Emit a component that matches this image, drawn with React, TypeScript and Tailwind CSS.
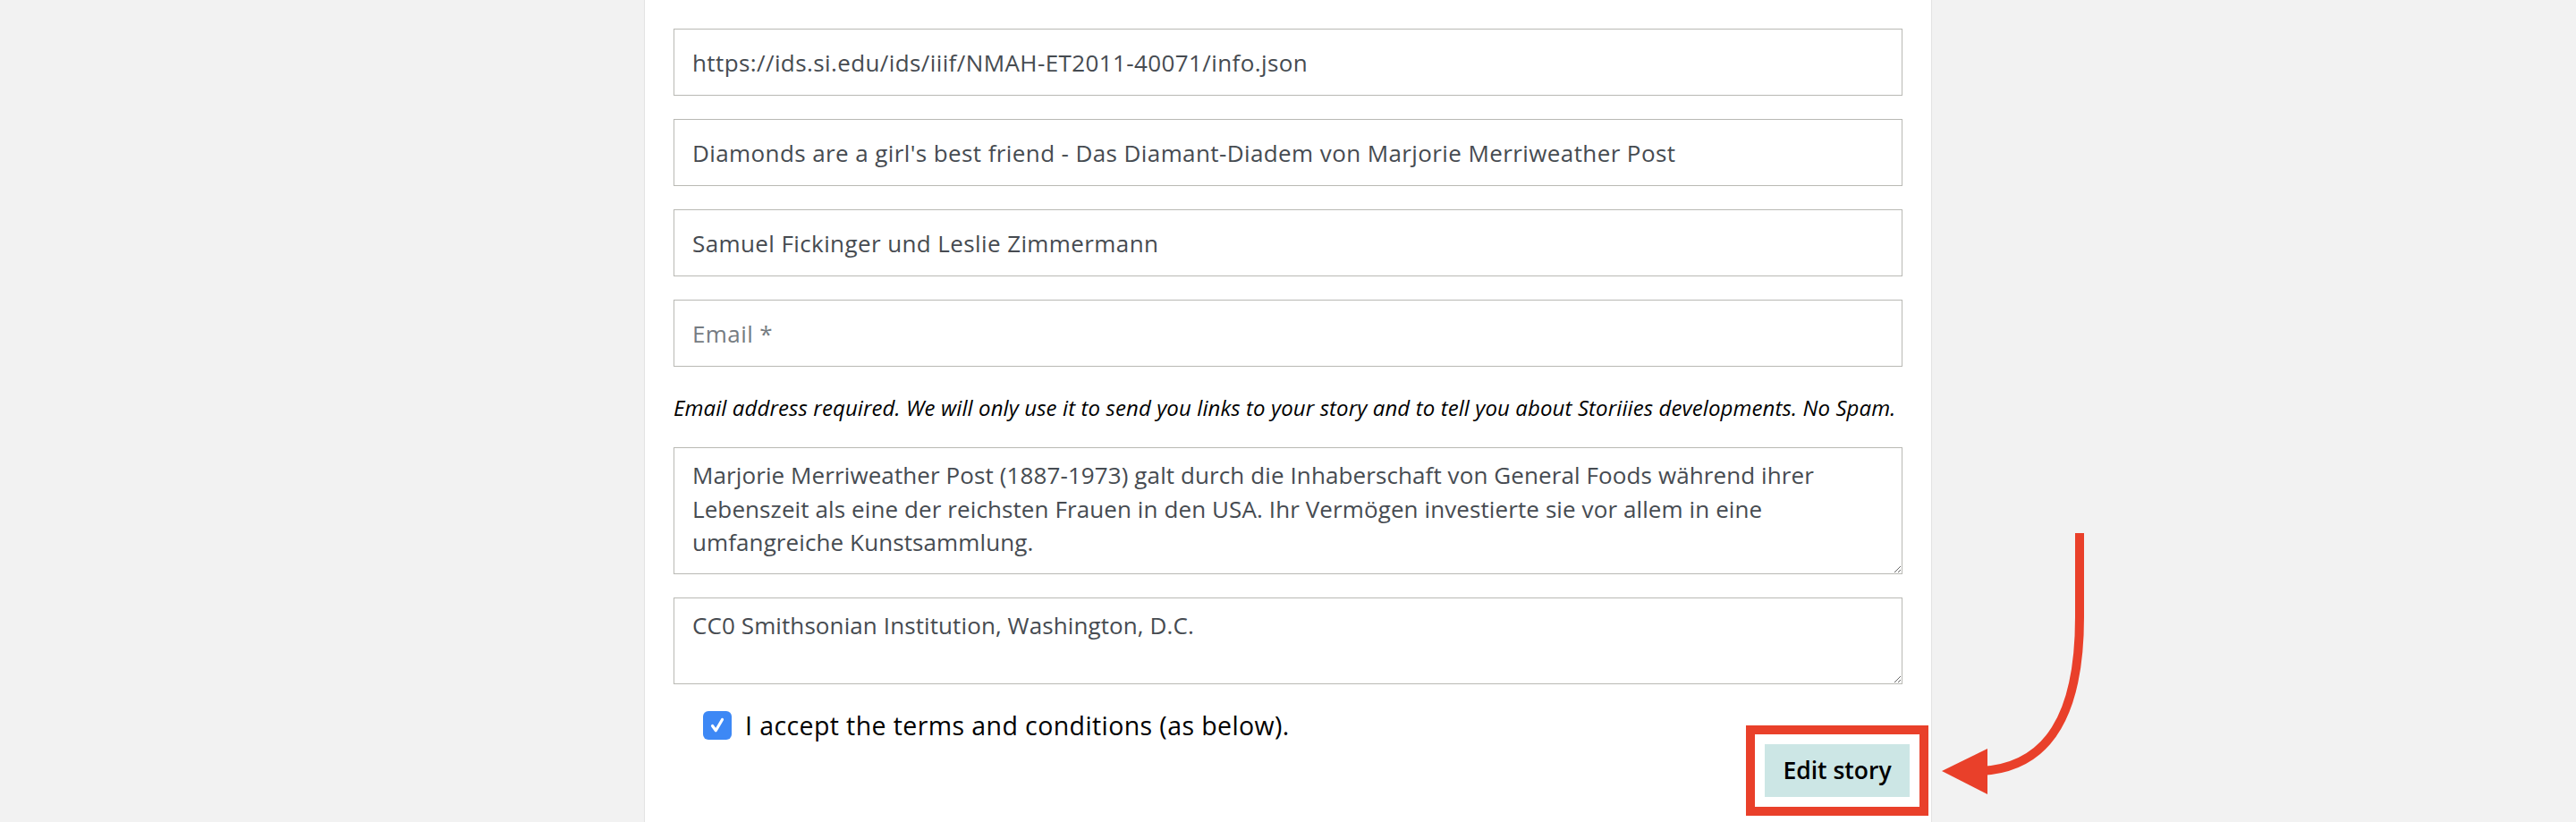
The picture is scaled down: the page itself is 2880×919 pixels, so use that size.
import React from "react";

const fieldCls =
  "block w-full h-[75px] border border-[#b9b9b4] bg-white px-[20px] text-[26px] tracking-[0.4px] text-[#464b51] placeholder:text-[#767c82] outline-none";
const areaCls =
  "block w-full border border-[#b9b9b4] bg-white px-[20px] pt-[12px] text-[26px] leading-[37.5px] tracking-[0.1px] text-[#464b51] outline-none";

const App: React.FC = () => {
  return (
    <div className="relative min-h-[919px] overflow-hidden bg-[#f2f2f2] font-['Open_Sans',sans-serif]">
      <div className="mx-auto min-h-[919px] w-[1440px] border-x border-[#e3e3e3] bg-white px-8 pt-8">
        <div className="flex flex-col gap-[26px]">
          <input className={fieldCls} defaultValue="https://ids.si.edu/ids/iiif/NMAH-ET2011-40071/info.json" />
          <input
            className={fieldCls}
            defaultValue="Diamonds are a girl's best friend - Das Diamant-Diadem von Marjorie Merriweather Post"
          />
          <input className={fieldCls} defaultValue="Samuel Fickinger und Leslie Zimmermann" />
          <input className={fieldCls} placeholder="Email *" />
        </div>
        <p className="mt-[29px] text-[24px] leading-[34px] italic tracking-[0.1px] text-black">
          Email address required. We will only use it to send you links to your story and to tell you about Storiiies
          developments. No Spam.
        </p>
        <textarea
          className={`${areaCls} mt-[27px] h-[142px]`}
          defaultValue="Marjorie Merriweather Post (1887-1973) galt durch die Inhaberschaft von General Foods während ihrer Lebenszeit als eine der reichsten Frauen in den USA. Ihr Vermögen investierte sie vor allem in eine umfangreiche Kunstsammlung."
        />
        <textarea
          className={`${areaCls} mt-[26px] h-[97px]`}
          defaultValue="CC0 Smithsonian Institution, Washington, D.C."
        />
        <label className="mt-[29px] flex items-center gap-[15px] pl-[33px] text-[28.5px] leading-[34px] tracking-[0.4px] text-black">
          <span className="flex h-[32px] w-[32px] items-center justify-center rounded-[6px] bg-[#3d88f5]">
            <svg viewBox="0 0 24 24" className="h-[24px] w-[24px]" fill="none" stroke="white" strokeWidth="3.2" strokeLinecap="round" strokeLinejoin="round">
              <path d="M6.5 12.5l3.8 5.2L17.5 5.5" />
            </svg>
          </span>
          I accept the terms and conditions (as below).
        </label>
        <div className="flex justify-end">
          <div className="relative mr-[-8px] mt-[4px]">
            <button className="h-[59px] w-[162px] bg-[#cce6e5] text-[26.5px] font-semibold text-black">Edit story</button>
            <div className="pointer-events-none absolute -inset-[21px] border-[10px] border-[#e9402a]" />
          </div>
        </div>
      </div>
      <svg className="pointer-events-none absolute left-0 top-0" width="2880" height="919" viewBox="0 0 2880 919">
        <path d="M2325 596 L2325 690 C2325 800 2290 858 2215 862" fill="none" stroke="#e9402a" strokeWidth="10" />
        <polygon points="2171,862 2222,837 2222,888" fill="#e9402a" />
      </svg>
    </div>
  );
};

export default App;
